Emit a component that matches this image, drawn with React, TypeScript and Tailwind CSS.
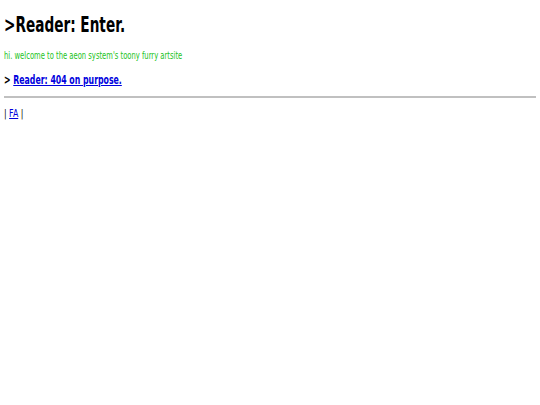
export default function App() {
  return (
    <div className="min-h-[405px] bg-white px-1 pt-[12px] text-black [font-family:'DejaVu_Sans',sans-serif]">
      {/* narrow face isn't installed, so squeeze the text horizontally */}
      <h1 className="origin-left scale-x-[0.62] text-[22px] font-bold leading-[26px]">
        &gt;Reader: Enter.
      </h1>
      <p className="mt-[12px] origin-left scale-x-[0.68] text-[10px] leading-[12px] text-[#22c322]">
        hi. welcome to the aeon system's toony furry artsite
      </p>
      <h3 className="mt-[10px] origin-left scale-x-[0.65] text-[12px] font-bold leading-[16px]">
        &gt;{" "}
        <a href="#" className="text-[#0000dd] underline">
          Reader: 404 on purpose.
        </a>
      </h3>
      <hr className="mt-[8px] border-t-2 border-[#c0c0c0]" />
      <p className="mt-[10px] origin-left scale-x-[0.78] text-[10px] leading-[12px]">
        |{" "}
        <a href="#" className="text-[#0000dd] underline">
          FA
        </a>{" "}
        |
      </p>
    </div>
  );
}
